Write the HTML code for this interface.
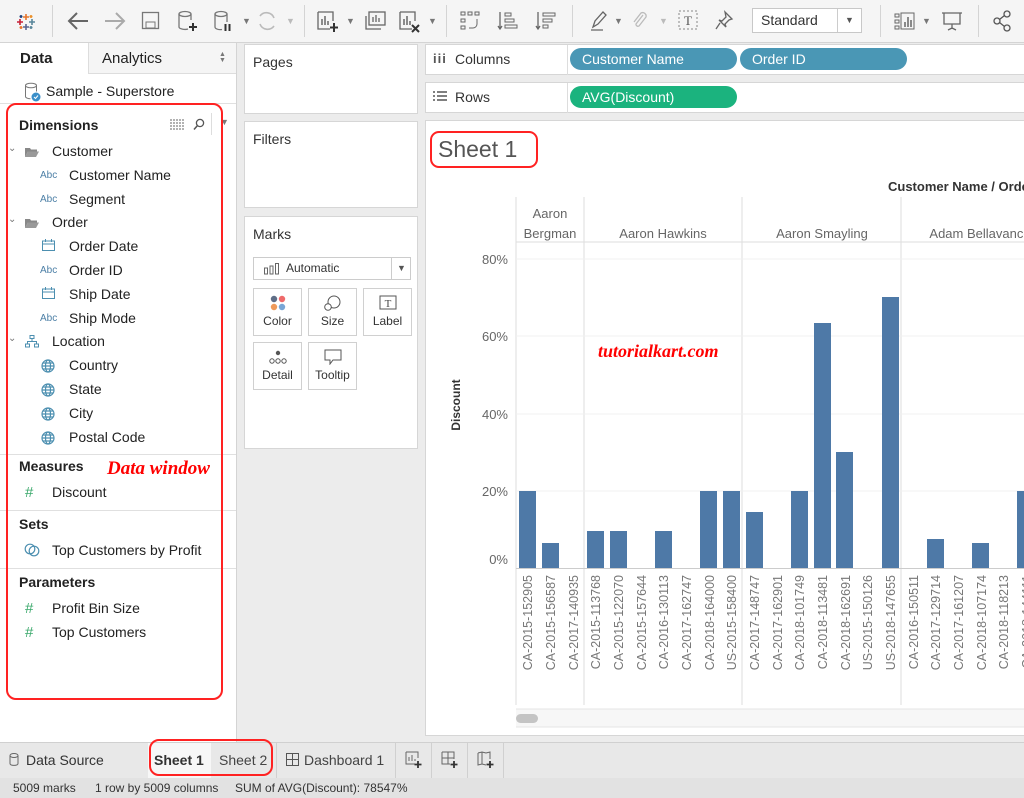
<!DOCTYPE html>
<html><head><meta charset="utf-8"><style>
*{box-sizing:border-box;margin:0;padding:0}
body{width:1024px;height:798px;overflow:hidden;font-family:"Liberation Sans",sans-serif;font-size:14px;color:#333;background:#ececec;position:relative}
.a{position:absolute}
.tb{left:0;top:0;width:1024px;height:43px;background:#f5f5f5;border-bottom:1px solid #d4d4d4}
.sep{position:absolute;top:5px;width:1px;height:32px;background:#d4d4d4}
.ic{position:absolute;top:10px}
.lp{left:0;top:43px;width:237px;height:699px;background:#fff;border-right:1px solid #d4d4d4}
.it{position:absolute;font-size:14px;color:#222}
.hd{position:absolute;font-weight:bold;font-size:14px;color:#222}
.hl{position:absolute;left:0;width:236px;height:1px;background:#e0e0e0}
.card{position:absolute;background:#fff;border:1px solid #d6d6d6}
.btn{position:absolute;width:49px;height:48px;border:1px solid #d0d0d0;background:#fff;font-size:12px;text-align:center;color:#333}
.pill{position:absolute;height:22px;border-radius:11px;color:#fff;font-size:14px;line-height:22px;padding-left:12px}
</style></head><body>
<div class="a tb">
 <svg class="ic" style="left:16px;top:12px" width="20" height="20" viewBox="0 0 20 20"><g stroke-width="1.6"><path d="M10 2v6M7 5h6" stroke="#e8762d"/><path d="M10 12v6M7 15h6" stroke="#5b6591"/><path d="M4 7v6M1 10h6" stroke="#c72037"/><path d="M16 7v6M13 10h6" stroke="#59879b"/><path d="M5 3v3M3.5 4.5h3" stroke="#1f447e"/><path d="M15 3v3M13.5 4.5h3" stroke="#eb912b"/><path d="M5 14v3M3.5 15.5h3" stroke="#e8762d"/><path d="M15 14v3M13.5 15.5h3" stroke="#5b879b"/></g></svg>
 <div class="sep" style="left:52px"></div>
 <svg class="ic" style="left:66px" width="24" height="22"><path d="M22 11H3M11 3l-8 8 8 8" stroke="#666" stroke-width="2" fill="none"/></svg>
 <svg class="ic" style="left:103px" width="24" height="22"><path d="M2 11h19M13 3l8 8-8 8" stroke="#aaa" stroke-width="2" fill="none"/></svg>
 <svg class="ic" style="left:141px;top:11px" width="20" height="20"><rect x="1.5" y="1.5" width="16" height="16" fill="none" stroke="#777" stroke-width="1.3"/><rect x="5" y="11" width="9" height="6" fill="none" stroke="#777"/></svg>
 <svg class="ic" style="left:177px" width="22" height="22"><ellipse cx="8" cy="4" rx="6" ry="2.5" fill="none" stroke="#777" stroke-width="1.3"/><path d="M2 4v13c0 2 6 3 9 2M14 4v6" fill="none" stroke="#777" stroke-width="1.3"/><path d="M16 13v8M12 17h8" stroke="#333" stroke-width="2"/></svg>
 <svg class="ic" style="left:213px" width="22" height="22"><ellipse cx="8" cy="4" rx="6" ry="2.5" fill="none" stroke="#777" stroke-width="1.3"/><path d="M2 4v13c0 2 4 3 7 2.5M14 4v8" fill="none" stroke="#777" stroke-width="1.3"/><path d="M12.5 14v7M16.5 14v7" stroke="#333" stroke-width="2"/></svg>
 <div class="a" style="left:242px;top:16px;font-size:9px;color:#777">▼</div>
 <svg class="ic" style="left:256px" width="22" height="22"><path d="M18 8a8 8 0 0 0-14-2M4 14a8 8 0 0 0 14 2" fill="none" stroke="#bbb" stroke-width="1.6"/></svg>
 <div class="a" style="left:286px;top:16px;font-size:9px;color:#bbb">▼</div>
 <div class="sep" style="left:304px"></div>
 <svg class="ic" style="left:316px" width="24" height="24"><path d="M2 2v17h12M2 2h15v9" fill="none" stroke="#666" stroke-width="1.3"/><path d="M6 15V9M9 15V6M12 15v-4" stroke="#666" stroke-width="1.5"/><path d="M18 13v9M14 17.5h8" stroke="#333" stroke-width="2"/></svg>
 <div class="a" style="left:346px;top:16px;font-size:9px;color:#777">▼</div>
 <svg class="ic" style="left:364px" width="24" height="22"><rect x="5" y="2" width="16" height="13" fill="none" stroke="#666" stroke-width="1.3"/><path d="M9 12V7M12 12V5M15 12V8M2 6v13h15" fill="none" stroke="#666" stroke-width="1.3"/></svg>
 <svg class="ic" style="left:398px" width="24" height="24"><path d="M2 2v17h12M2 2h15v9" fill="none" stroke="#666" stroke-width="1.3"/><path d="M6 15V9M9 15V6M12 15v-4" stroke="#666" stroke-width="1.5"/><path d="M14 15l7 7M21 15l-7 7" stroke="#333" stroke-width="2"/></svg>
 <div class="a" style="left:428px;top:16px;font-size:9px;color:#777">▼</div>
 <div class="sep" style="left:446px"></div>
 <svg class="ic" style="left:460px" width="22" height="22"><g fill="none" stroke="#666"><rect x="1" y="2" width="4" height="3"/><rect x="8" y="2" width="4" height="3"/><rect x="15" y="2" width="4" height="3"/><rect x="1" y="9" width="4" height="3"/><rect x="1" y="16" width="4" height="3"/><path d="M17 9v5a4 4 0 0 1-4 4h-4"/></g></svg>
 <svg class="ic" style="left:497px" width="22" height="22"><path d="M3 2v17M1 16l2 3 2-3" fill="none" stroke="#666" stroke-width="1.3"/><g fill="none" stroke="#666"><rect x="8" y="3" width="6" height="3"/><rect x="8" y="9" width="9" height="3"/><rect x="8" y="15" width="12" height="3"/></g></svg>
 <svg class="ic" style="left:535px" width="22" height="22"><path d="M3 2v17M1 16l2 3 2-3" fill="none" stroke="#666" stroke-width="1.3"/><g fill="none" stroke="#666"><rect x="8" y="3" width="12" height="3"/><rect x="8" y="9" width="9" height="3"/><rect x="8" y="15" width="5" height="3"/></g></svg>
 <div class="sep" style="left:572px"></div>
 <svg class="ic" style="left:589px" width="20" height="22"><path d="M4 17l2-6 8-9 3 3-8 9zM2 20h12" fill="none" stroke="#666" stroke-width="1.3"/></svg>
 <div class="a" style="left:614px;top:16px;font-size:9px;color:#777">▼</div>
 <svg class="ic" style="left:631px" width="18" height="22"><path d="M12 5l-7 9a2 2 0 0 0 3 2l7-9a3.5 3.5 0 0 0-5-4l-7 9" fill="none" stroke="#bbb" stroke-width="1.3"/></svg>
 <div class="a" style="left:659px;top:16px;font-size:9px;color:#bbb">▼</div>
 <svg class="ic" style="left:678px" width="20" height="20"><rect x="1" y="1" width="18" height="18" fill="none" stroke="#888" stroke-dasharray="2,2"/><text x="10" y="15" font-size="13" text-anchor="middle" fill="#555" font-family="Liberation Serif">T</text></svg>
 <svg class="ic" style="left:714px" width="20" height="22"><path d="M11 2l7 7-3 1-4 4 1 3-7-7 3 1 4-4zM6 13l-4 6" fill="none" stroke="#666" stroke-width="1.3"/></svg>
 <div class="a" style="left:752px;top:8px;width:110px;height:25px;border:1px solid #c8c8c8;background:#fff;font-size:14px;line-height:23px;padding-left:8px">Standard<div class="a" style="left:84px;top:0;width:1px;height:23px;background:#ccc"></div><div class="a" style="left:92px;top:0;font-size:9px;color:#555">▼</div></div>
 <div class="sep" style="left:880px"></div>
 <svg class="ic" style="left:894px" width="24" height="22"><g fill="none" stroke="#666"><rect x="1" y="4" width="4" height="3"/><rect x="1" y="10" width="4" height="3"/><rect x="1" y="16" width="4" height="3"/><rect x="7" y="3" width="13" height="16"/></g><path d="M11 17v-5M14 17V7M17 17v-7" stroke="#666" stroke-width="1.5"/></svg>
 <div class="a" style="left:922px;top:16px;font-size:9px;color:#777">▼</div>
 <svg class="ic" style="left:940px" width="24" height="22"><path d="M2 3h20M4 3v11h16V3M12 14v5M8 20l4-2 4 2" fill="none" stroke="#666" stroke-width="1.3"/></svg>
 <div class="sep" style="left:978px"></div>
 <svg class="ic" style="left:993px" width="20" height="22"><circle cx="14" cy="4" r="3" fill="none" stroke="#555" stroke-width="1.3"/><circle cx="4" cy="11" r="3" fill="none" stroke="#555" stroke-width="1.3"/><circle cx="14" cy="18" r="3" fill="none" stroke="#555" stroke-width="1.3"/><path d="M6.5 9.5l5-4M6.5 12.5l5 4" stroke="#555" stroke-width="1.3"/></svg>
</div>

<div class="a lp">
 <div class="a" style="left:88px;top:0;width:148px;height:31px;background:#f5f5f5;border-left:1px solid #ddd;border-bottom:1px solid #ddd"></div>
 <div class="hd" style="left:20px;top:7px;font-size:15px">Data</div>
 <div class="it" style="left:102px;top:7px;font-size:15px">Analytics</div>
 <div class="a" style="left:219px;top:9px;font-size:7px;line-height:6px;color:#777">▲<br>▼</div>
 <svg class="a" style="left:24px;top:39px" width="18" height="20"><ellipse cx="7" cy="3.5" rx="5.5" ry="2.3" fill="none" stroke="#777"/><path d="M1.5 3.5v11c0 1.5 3 2.3 5 2.3M12.5 3.5v6" fill="none" stroke="#777"/><circle cx="12" cy="15" r="4.5" fill="#3b8fc9"/><path d="M10 15l1.5 1.5 2.5-3" stroke="#fff" fill="none"/></svg>
 <div class="it" style="left:46px;top:40px">Sample - Superstore</div>
 <div class="hl" style="top:60px"></div>
 <div class="hd" style="left:19px;top:74px">Dimensions</div>
 <svg class="a" style="left:170px;top:76px" width="14" height="11"><path d="M0 1h14M0 4h14M0 7h14M0 10h14" stroke="#666" stroke-dasharray="2,1"/></svg>
 <svg class="a" style="left:193px;top:75px" width="12" height="13"><circle cx="7" cy="5" r="3.6" fill="none" stroke="#555" stroke-width="1.3"/><path d="M4.5 7.5L1 11.5" stroke="#555" stroke-width="1.5"/></svg>
 <div class="a" style="left:211px;top:70px;width:1px;height:22px;background:#ddd"></div>
 <div class="a" style="left:220px;top:74px;font-size:9px;color:#777">▼</div>

 <div class="a" style="left:8px;top:100px;font-size:10px;color:#777">⌄</div>
 <svg class="a" style="left:24px;top:103px" width="16" height="12"><path d="M1 2h5l1 1.5h6v2H4L1 11z" fill="#888"/><path d="M4 5.5h11l-3 5.5H1z" fill="#999"/></svg>
 <div class="it" style="left:52px;top:100px">Customer</div>
 <div class="a" style="left:40px;top:127px;font-size:10px;color:#4c7fa6">Abc</div>
 <div class="it" style="left:69px;top:124px">Customer Name</div>
 <div class="a" style="left:40px;top:151px;font-size:10px;color:#4c7fa6">Abc</div>
 <div class="it" style="left:69px;top:148px">Segment</div>
 <div class="a" style="left:8px;top:171px;font-size:10px;color:#777">⌄</div>
 <svg class="a" style="left:24px;top:174px" width="16" height="12"><path d="M1 2h5l1 1.5h6v2H4L1 11z" fill="#888"/><path d="M4 5.5h11l-3 5.5H1z" fill="#999"/></svg>
 <div class="it" style="left:52px;top:171px">Order</div>
 <svg class="a" style="left:42px;top:196px" width="13" height="12"><rect x="0.5" y="2" width="12" height="9.5" fill="none" stroke="#4c8fb0"/><path d="M0.5 5h12M3.5 0v3M9.5 0v3" stroke="#4c8fb0"/></svg>
 <div class="it" style="left:69px;top:195px">Order Date</div>
 <div class="a" style="left:40px;top:222px;font-size:10px;color:#4c7fa6">Abc</div>
 <div class="it" style="left:69px;top:219px">Order ID</div>
 <svg class="a" style="left:42px;top:244px" width="13" height="12"><rect x="0.5" y="2" width="12" height="9.5" fill="none" stroke="#4c8fb0"/><path d="M0.5 5h12M3.5 0v3M9.5 0v3" stroke="#4c8fb0"/></svg>
 <div class="it" style="left:69px;top:243px">Ship Date</div>
 <div class="a" style="left:40px;top:270px;font-size:10px;color:#4c7fa6">Abc</div>
 <div class="it" style="left:69px;top:267px">Ship Mode</div>
 <div class="a" style="left:8px;top:290px;font-size:10px;color:#777">⌄</div>
 <svg class="a" style="left:25px;top:292px" width="14" height="13"><g fill="none" stroke="#4c8fb0"><rect x="5" y="0.5" width="4" height="3"/><rect x="0.5" y="9" width="4" height="3"/><rect x="9.5" y="9" width="4" height="3"/><path d="M7 3.5v3M2.5 9V6.5h9V9"/></g></svg>
 <div class="it" style="left:52px;top:290px">Location</div>
 <svg class="a" style="left:41px;top:316px" width="14" height="14"><g fill="none" stroke="#4c8fb0" stroke-width="1.2"><circle cx="7" cy="7" r="6"/><ellipse cx="7" cy="7" rx="2.5" ry="6"/><path d="M1 7h12M2 4h10M2 10h10"/></g></svg>
 <div class="it" style="left:69px;top:314px">Country</div>
 <svg class="a" style="left:41px;top:340px" width="14" height="14"><g fill="none" stroke="#4c8fb0" stroke-width="1.2"><circle cx="7" cy="7" r="6"/><ellipse cx="7" cy="7" rx="2.5" ry="6"/><path d="M1 7h12M2 4h10M2 10h10"/></g></svg>
 <div class="it" style="left:69px;top:338px">State</div>
 <svg class="a" style="left:41px;top:364px" width="14" height="14"><g fill="none" stroke="#4c8fb0" stroke-width="1.2"><circle cx="7" cy="7" r="6"/><ellipse cx="7" cy="7" rx="2.5" ry="6"/><path d="M1 7h12M2 4h10M2 10h10"/></g></svg>
 <div class="it" style="left:69px;top:362px">City</div>
 <svg class="a" style="left:41px;top:388px" width="14" height="14"><g fill="none" stroke="#4c8fb0" stroke-width="1.2"><circle cx="7" cy="7" r="6"/><ellipse cx="7" cy="7" rx="2.5" ry="6"/><path d="M1 7h12M2 4h10M2 10h10"/></g></svg>
 <div class="it" style="left:69px;top:386px">Postal Code</div>
 <div class="hl" style="top:411px"></div>
 <div class="hd" style="left:19px;top:415px">Measures</div>
 <div class="a" style="left:107px;top:415px;font-family:'Liberation Serif',serif;font-style:italic;font-weight:bold;font-size:19px;color:#f00">Data window</div>
 <div class="a" style="left:25px;top:441px;font-size:15px;color:#3aa86b">#</div>
 <div class="it" style="left:52px;top:441px">Discount</div>
 <div class="hl" style="top:467px"></div>
 <div class="hd" style="left:19px;top:473px">Sets</div>
 <svg class="a" style="left:24px;top:500px" width="17" height="14"><circle cx="6" cy="6" r="4.8" fill="none" stroke="#4c8fb0" stroke-width="1.2"/><circle cx="10" cy="8" r="4.8" fill="none" stroke="#4c8fb0" stroke-width="1.2"/></svg>
 <div class="it" style="left:52px;top:499px">Top Customers by Profit</div>
 <div class="hl" style="top:525px"></div>
 <div class="hd" style="left:19px;top:531px">Parameters</div>
 <div class="a" style="left:25px;top:557px;font-size:15px;color:#3aa86b">#</div>
 <div class="it" style="left:52px;top:557px">Profit Bin Size</div>
 <div class="a" style="left:25px;top:581px;font-size:15px;color:#3aa86b">#</div>
 <div class="it" style="left:52px;top:581px">Top Customers</div>
</div>
<div class="a" style="left:6px;top:103px;width:217px;height:597px;border:2px solid #f22;border-radius:10px"></div>

<div class="card" style="left:244px;top:44px;width:174px;height:70px"><div class="a" style="left:8px;top:9px">Pages</div></div>
<div class="card" style="left:244px;top:121px;width:174px;height:87px"><div class="a" style="left:8px;top:9px">Filters</div></div>
<div class="card" style="left:244px;top:216px;width:174px;height:233px">
 <div class="a" style="left:8px;top:9px">Marks</div>
 <div class="a" style="left:8px;top:40px;width:158px;height:23px;border:1px solid #ccc;font-size:12px;line-height:21px;padding-left:32px">Automatic
  <svg class="a" style="left:10px;top:5px" width="16" height="12"><g fill="none" stroke="#666"><rect x="0.5" y="5" width="3" height="6"/><rect x="6" y="3" width="3" height="8"/><rect x="11.5" y="0.5" width="3" height="10.5"/></g></svg>
  <div class="a" style="left:137px;top:0;width:1px;height:21px;background:#ccc"></div><div class="a" style="left:143px;top:0;font-size:9px;color:#555">▼</div></div>
 <div class="btn" style="left:8px;top:71px"><svg style="margin-top:6px" width="16" height="16"><circle cx="4" cy="4" r="3.2" fill="#5f6e87"/><circle cx="12" cy="4" r="3.2" fill="#ef6a6a"/><circle cx="4" cy="12" r="3.2" fill="#ef9a5a"/><circle cx="12" cy="12" r="3.2" fill="#79a6d6"/></svg><div>Color</div></div>
 <div class="btn" style="left:63px;top:71px"><svg style="margin-top:6px" width="18" height="16"><circle cx="10" cy="7" r="6" fill="none" stroke="#555"/><circle cx="4" cy="12" r="3.3" fill="#fff" stroke="#555"/></svg><div>Size</div></div>
 <div class="btn" style="left:118px;top:71px"><svg style="margin-top:6px" width="18" height="16"><rect x="1" y="1" width="16" height="13" fill="none" stroke="#555"/><text x="9" y="12" font-size="11" text-anchor="middle" fill="#444" font-family="Liberation Serif">T</text></svg><div>Label</div></div>
 <div class="btn" style="left:8px;top:125px"><svg style="margin-top:6px" width="18" height="16"><circle cx="9" cy="4" r="2.2" fill="#555"/><circle cx="3" cy="12" r="2.2" fill="none" stroke="#555"/><circle cx="9" cy="12" r="2.2" fill="none" stroke="#555"/><circle cx="15" cy="12" r="2.2" fill="none" stroke="#555"/></svg><div>Detail</div></div>
 <div class="btn" style="left:63px;top:125px"><svg style="margin-top:6px" width="18" height="16"><path d="M1 1h16v10H9l-3 4v-4H1z" fill="none" stroke="#555"/></svg><div>Tooltip</div></div>
</div>

<div class="card" style="left:425px;top:44px;width:599px;height:31px;border-right:0"><div class="a" style="left:141px;top:0;width:1px;height:30px;background:#ddd"></div></div>
<div class="a" style="left:433px;top:51px;font-weight:bold;font-size:13px;color:#555;letter-spacing:1px">iii</div>
<div class="a" style="left:455px;top:51px">Columns</div>
<div class="pill" style="left:570px;top:48px;width:167px;background:#4a97b5">Customer Name</div>
<div class="pill" style="left:740px;top:48px;width:167px;background:#4a97b5">Order ID</div>
<div class="card" style="left:425px;top:82px;width:599px;height:31px;border-right:0"><div class="a" style="left:141px;top:0;width:1px;height:30px;background:#ddd"></div></div>
<svg class="a" style="left:433px;top:91px" width="14" height="11"><path d="M0 1h2M4 1h10M0 5h2M4 5h10M0 9h2M4 9h10" stroke="#555" stroke-width="1.5"/></svg>
<div class="a" style="left:455px;top:89px">Rows</div>
<div class="pill" style="left:570px;top:86px;width:167px;background:#1bb37e">AVG(Discount)</div>

<div class="card" style="left:425px;top:120px;width:599px;height:616px;border-right:0"></div>
<div class="a" style="left:438px;top:136px;font-size:23px;color:#555">Sheet 1</div>
<div class="a" style="left:430px;top:131px;width:108px;height:37px;border:2px solid #f22;border-radius:9px"></div>
<svg class="a" style="left:426px;top:121px" width="598" height="614" viewBox="426 121 598 614" font-family="Liberation Sans, sans-serif">
 <text x="888" y="191" font-size="13" font-weight="bold" fill="#333">Customer Name / Order ID</text>
 <g stroke="#ddd"><path d="M516 197V705M584 197V705M742 197V705M901 197V705"/><path d="M516 242H1024"/></g>
 <g stroke="#f0f0f0"><path d="M516 259H1024M516 336H1024M516 414H1024M516 491H1024"/></g>
 <path d="M516 568.5H1024" stroke="#ccc"/>
 <g font-size="13" fill="#666" text-anchor="middle">
  <text x="550" y="218">Aaron</text><text x="550" y="238">Bergman</text>
  <text x="663" y="238">Aaron Hawkins</text><text x="822" y="238">Aaron Smayling</text><text x="980" y="238">Adam Bellavance</text>
 </g>
 <g font-size="13" fill="#666" text-anchor="end"><text x="508" y="264">80%</text><text x="508" y="341">60%</text><text x="508" y="419">40%</text><text x="508" y="496">20%</text><text x="508" y="564">0%</text></g>
 <text transform="translate(460,405) rotate(-90)" font-size="12" font-weight="bold" fill="#333" text-anchor="middle">Discount</text>
 <text x="598" y="357" font-family="Liberation Serif, serif" font-style="italic" font-weight="bold" font-size="18" fill="#f00">tutorialkart.com</text>
 <g fill="#4e79a7">
  <rect x="519" y="491" width="17" height="77"/><rect x="542" y="543" width="17" height="25"/>
  <rect x="587" y="531" width="17" height="37"/><rect x="610" y="531" width="17" height="37"/>
  <rect x="655" y="531" width="17" height="37"/><rect x="700" y="491" width="17" height="77"/>
  <rect x="723" y="491" width="17" height="77"/><rect x="746" y="512" width="17" height="56"/>
  <rect x="791" y="491" width="17" height="77"/><rect x="814" y="323" width="17" height="245"/>
  <rect x="836" y="452" width="17" height="116"/><rect x="882" y="297" width="17" height="271"/>
  <rect x="927" y="539" width="17" height="29"/><rect x="972" y="543" width="17" height="25"/>
  <rect x="1017" y="491" width="17" height="77"/>
 </g>
 <g font-size="12.5" fill="#777" text-anchor="end">
  <text transform="translate(532,575) rotate(-90)">CA-2015-152905</text>
  <text transform="translate(555,575) rotate(-90)">CA-2015-156587</text>
  <text transform="translate(578,575) rotate(-90)">CA-2017-140935</text>
  <text transform="translate(600,575) rotate(-90)">CA-2015-113768</text>
  <text transform="translate(623,575) rotate(-90)">CA-2015-122070</text>
  <text transform="translate(646,575) rotate(-90)">CA-2015-157644</text>
  <text transform="translate(668,575) rotate(-90)">CA-2016-130113</text>
  <text transform="translate(691,575) rotate(-90)">CA-2017-162747</text>
  <text transform="translate(714,575) rotate(-90)">CA-2018-164000</text>
  <text transform="translate(736,575) rotate(-90)">US-2015-158400</text>
  <text transform="translate(759,575) rotate(-90)">CA-2017-148747</text>
  <text transform="translate(782,575) rotate(-90)">CA-2017-162901</text>
  <text transform="translate(804,575) rotate(-90)">CA-2018-101749</text>
  <text transform="translate(827,575) rotate(-90)">CA-2018-113481</text>
  <text transform="translate(850,575) rotate(-90)">CA-2018-162691</text>
  <text transform="translate(872,575) rotate(-90)">US-2015-150126</text>
  <text transform="translate(895,575) rotate(-90)">US-2018-147655</text>
  <text transform="translate(918,575) rotate(-90)">CA-2016-150511</text>
  <text transform="translate(940,575) rotate(-90)">CA-2017-129714</text>
  <text transform="translate(963,575) rotate(-90)">CA-2017-161207</text>
  <text transform="translate(986,575) rotate(-90)">CA-2018-107174</text>
  <text transform="translate(1008,575) rotate(-90)">CA-2018-118213</text>
  <text transform="translate(1031,575) rotate(-90)">CA-2018-144111</text>
 </g>
 <rect x="516" y="709" width="508" height="18" fill="#f7f7f7"/><path d="M516 709H1024M516 727H1024" stroke="#e4e4e4"/>
 <rect x="516" y="714" width="22" height="9" rx="4.5" fill="#c4c4c4"/>
</svg>

<div class="a" style="left:0;top:742px;width:1024px;height:36px;background:#e8e8e8;border-top:1px solid #d0d0d0"></div>
<svg class="a" style="left:9px;top:753px" width="10" height="13"><ellipse cx="5" cy="2.5" rx="4" ry="2" fill="none" stroke="#666"/><path d="M1 2.5v8c0 2.5 8 2.5 8 0v-8" fill="none" stroke="#666"/></svg>
<div class="a" style="left:26px;top:752px">Data Source</div>
<div class="a" style="left:148px;top:743px;width:63px;height:35px;background:#f7f7f7"></div>
<div class="a" style="left:154px;top:752px;font-weight:bold;color:#333">Sheet 1</div>
<div class="a" style="left:219px;top:752px;color:#444">Sheet 2</div>
<div class="a" style="left:149px;top:739px;width:124px;height:37px;border:2px solid #f22;border-radius:10px"></div>
<div class="a" style="left:276px;top:743px;width:1px;height:35px;background:#d0d0d0"></div>
<svg class="a" style="left:286px;top:753px" width="13" height="13"><rect x="0.5" y="0.5" width="12" height="12" fill="none" stroke="#555"/><path d="M6.5 0.5v12M0.5 6.5h12" stroke="#555"/></svg>
<div class="a" style="left:304px;top:752px;color:#444">Dashboard 1</div>
<div class="a" style="left:395px;top:743px;width:1px;height:35px;background:#d0d0d0"></div>
<div class="a" style="left:431px;top:743px;width:1px;height:35px;background:#d0d0d0"></div>
<div class="a" style="left:467px;top:743px;width:1px;height:35px;background:#d0d0d0"></div>
<div class="a" style="left:503px;top:743px;width:1px;height:35px;background:#d0d0d0"></div>
<svg class="a" style="left:405px;top:751px" width="18" height="18"><path d="M1 1v12h9M1 1h12v6" fill="none" stroke="#666"/><path d="M4 10V6M7 10V4M10 10V8" stroke="#666"/><path d="M13 10v7M9.5 13.5h7" stroke="#333" stroke-width="1.8"/></svg>
<svg class="a" style="left:441px;top:751px" width="18" height="18"><path d="M1 1h12v7M1 1v12h8M7 1v12M1 7h12" fill="none" stroke="#666"/><path d="M13 10v7M9.5 13.5h7" stroke="#333" stroke-width="1.8"/></svg>
<svg class="a" style="left:477px;top:751px" width="18" height="18"><path d="M1 2l4-1 4 1 4-1v7M1 2v12l4-1 4 1M5 1v12" fill="none" stroke="#666"/><path d="M13 10v7M9.5 13.5h7" stroke="#333" stroke-width="1.8"/></svg>
<div class="a" style="left:0;top:778px;width:1024px;height:20px;background:#e2e2e2;font-size:12px;color:#333;line-height:20px">
 <span class="a" style="left:13px">5009 marks</span><span class="a" style="left:95px">1 row by 5009 columns</span><span class="a" style="left:235px">SUM of AVG(Discount): 78547%</span></div>
</body></html>
